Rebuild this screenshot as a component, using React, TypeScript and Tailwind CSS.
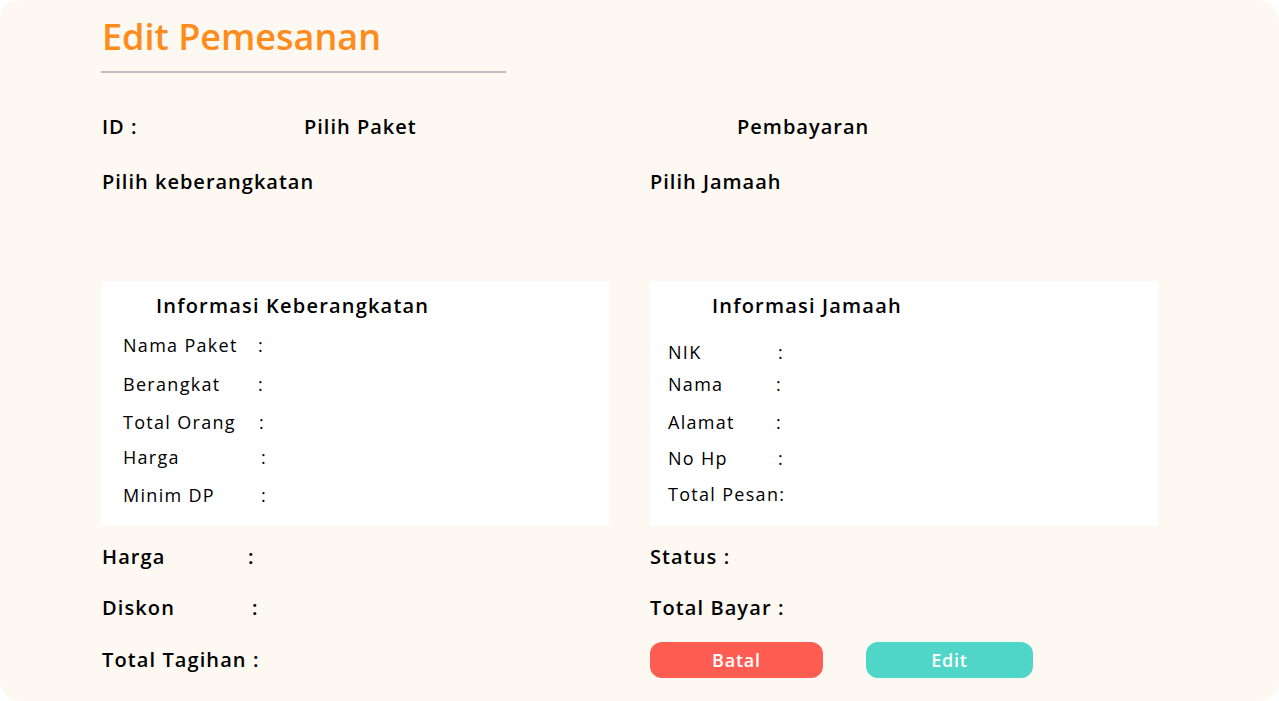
import React from "react";

const font = { fontFamily: "'Open Sans', 'Noto Sans', sans-serif" };

export default function App() {
  return (
    <div className="w-[1279px] h-[701px] bg-white" style={font}>
      <div className="w-[1279px] h-[701px] bg-[#fdf8f2] rounded-[20px] pl-[101px] text-black">
        <div className="pt-[15px]">
          <h1 className="text-[36px] font-semibold text-[#ff8c1a] leading-[44px] pl-[1px] tracking-[0px]">Edit Pemesanan</h1>
          <div className="w-[405px] h-[2px] bg-[#bdbdbd] mt-[12px]" />
        </div>

        <div className="flex items-center h-[24px] leading-[24px] mt-[42px] text-[20px] font-semibold tracking-[1px] pl-[1px]">
          <span className="w-[202px]">ID :</span>
          <span className="w-[433px]">Pilih Paket</span>
          <span>Pembayaran</span>
        </div>

        <div className="flex items-center h-[24px] leading-[24px] mt-[31px] text-[20px] font-semibold tracking-[1px] pl-[1px]">
          <span className="w-[548px]">Pilih keberangkatan</span>
          <span>Pilih Jamaah</span>
        </div>

        <div className="flex gap-[41px] mt-[87px]">
          <div className="w-[508px] h-[245px] bg-white pl-[22px] pt-[13px] text-[18px] font-medium leading-[20px] tracking-[1.3px]">
            <div className="pl-[33px] text-[20px] font-semibold h-[24px] leading-[24px] tracking-[1.2px] flex items-center">Informasi Keberangkatan</div>
            <div className="flex flex-col mt-[17px]">
              <div className="flex items-center h-[20px]"><span className="w-[135px]">Nama Paket</span><span>:</span></div>
              <div className="flex items-center h-[20px] mt-[19px]"><span className="w-[135px]">Berangkat</span><span>:</span></div>
              <div className="flex items-center h-[20px] mt-[18px]"><span className="w-[136px]">Total Orang</span><span>:</span></div>
              <div className="flex items-center h-[20px] mt-[15px]"><span className="w-[138px]">Harga</span><span>:</span></div>
              <div className="flex items-center h-[20px] mt-[18px]"><span className="w-[138px]">Minim DP</span><span>:</span></div>
            </div>
          </div>
          <div className="w-[508px] h-[245px] bg-white pl-[18px] pt-[13px] text-[18px] font-medium leading-[20px] tracking-[1.3px]">
            <div className="pl-[44px] text-[20px] font-semibold h-[24px] leading-[24px] tracking-[1.2px] flex items-center">Informasi Jamaah</div>
            <div className="flex flex-col mt-[24px]">
              <div className="flex items-center h-[20px]"><span className="w-[110px]">NIK</span><span>:</span></div>
              <div className="flex items-center h-[20px] mt-[12px]"><span className="w-[108px]">Nama</span><span>:</span></div>
              <div className="flex items-center h-[20px] mt-[18px]"><span className="w-[108px]">Alamat</span><span>:</span></div>
              <div className="flex items-center h-[20px] mt-[16px]"><span className="w-[110px]">No Hp</span><span>:</span></div>
              <div className="flex items-center h-[20px] mt-[16px]"><span>Total Pesan:</span></div>
            </div>
          </div>
        </div>

        <div className="flex gap-[41px] mt-[19px] text-[20px] leading-[24px] font-semibold tracking-[1.1px]">
          <div className="w-[508px] flex flex-col pl-[1px]">
            <div className="flex items-center h-[24px]"><span className="w-[146px]">Harga</span><span>:</span></div>
            <div className="flex items-center h-[24px] mt-[27px]"><span className="w-[150px]">Diskon</span><span>:</span></div>
            <div className="flex items-center h-[24px] mt-[28px]"><span>Total Tagihan :</span></div>
          </div>
          <div className="flex flex-col">
            <div className="flex items-center h-[24px]">Status :</div>
            <div className="flex items-center h-[24px] mt-[27px]">Total Bayar :</div>
            <div className="flex mt-[22px] gap-[43px]">
              <button className="w-[173px] h-[36px] rounded-[12px] bg-[#ff5c52] text-white text-[18px] font-semibold tracking-[0.8px]">Batal</button>
              <button className="w-[167px] h-[36px] rounded-[12px] bg-[#50d6c8] text-white text-[18px] font-semibold tracking-[0.8px]">Edit</button>
            </div>
          </div>
        </div>
      </div>
    </div>
  );
}
